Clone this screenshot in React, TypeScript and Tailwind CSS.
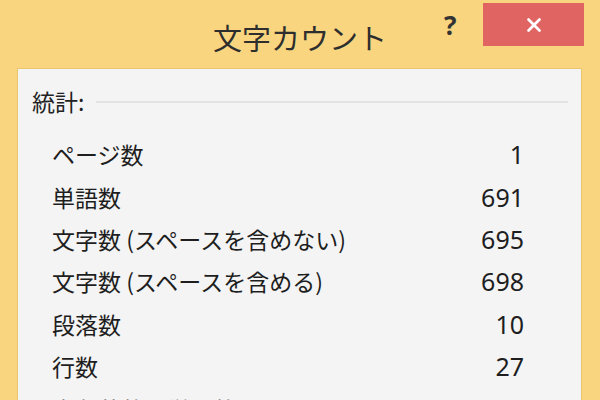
import { X } from 'lucide-react';

interface Stat {
  label: string;
  value: string;
}

const stats: Stat[] = [
  { label: 'ページ数', value: '1' },
  { label: '単語数', value: '691' },
  { label: '文字数 (スペースを含めない)', value: '695' },
  { label: '文字数 (スペースを含める)', value: '698' },
  { label: '段落数', value: '10' },
  { label: '行数', value: '27' },
  { label: '半角英数の単語数', value: '0' },
];

const jp = { fontFamily: '"Noto Sans CJK JP", "Noto Sans", sans-serif' };
const num = { fontFamily: '"Noto Sans", "Open Sans", sans-serif' };

export default function App() {
  return (
    <div className="w-[600px] h-[400px] overflow-hidden bg-[#f8d57e] flex flex-col" style={jp}>
      <div className="relative h-[68px] shrink-0">
        <div className="absolute left-0 right-0 top-[15px] text-center text-[29px] leading-[44px] text-[#2e2e2e]">
          文字カウント
        </div>
        <div className="absolute left-[444px] top-[8px] text-[26px] font-bold leading-[34px] text-[#333]" style={num}>
          ?
        </div>
        <div className="absolute right-[16px] top-[3px] w-[101px] h-[43px] bg-[#e06462] flex items-center justify-center">
          <X className="text-white" size={22} strokeWidth={3} />
        </div>
      </div>

      <div className="ml-[17px] w-[565px] flex-1 bg-[#f4f4f4] border border-[#e9c56d] pt-[17px]">
        <div className="flex items-center pl-[14px] pr-[13px] h-[30px]">
          <span className="text-[23px] leading-[30px] text-[#222]">統計:</span>
          <div className="flex-1 h-[2px] bg-[#e3e3e3] ml-[12px] mt-[2px]" />
        </div>
        <div className="mt-[17px] pl-[34px] pr-[57px]">
          {stats.map((s) => (
            <div key={s.label} className="flex items-center justify-between h-[42.4px]">
              <span className="text-[23px] text-[#1e1e1e] leading-[30px]">{s.label}</span>
              <span className="text-[25px] text-[#1e1e1e] leading-[30px]" style={num}>
                {s.value}
              </span>
            </div>
          ))}
        </div>
      </div>
    </div>
  );
}
